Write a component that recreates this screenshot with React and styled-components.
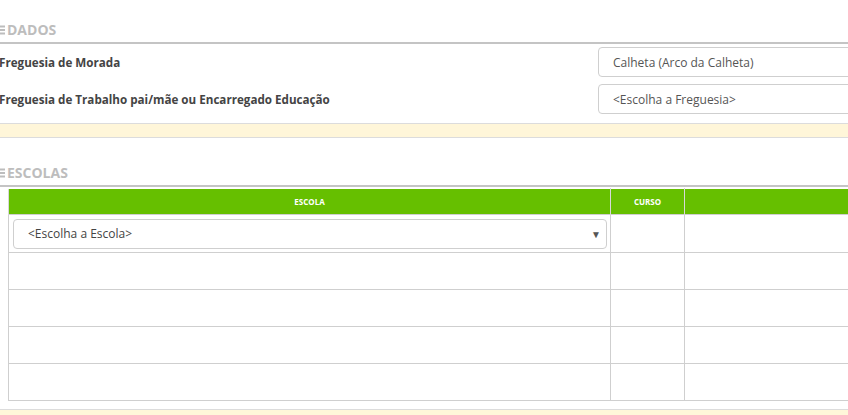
import React from 'react'
import styled, { createGlobalStyle } from 'styled-components'

const GlobalStyle = createGlobalStyle`
  html, body {
    margin: 0;
    padding: 0;
    background: #fff;
    overflow: hidden;
    font-family: 'Open Sans', 'Liberation Sans', sans-serif;
  }
`

const Page = styled.div`
  width: 848px;
  height: 415px;
  overflow: hidden;
  padding-top: 20px;
  box-sizing: border-box;
`

const SectionTitle = styled.div`
  display: flex;
  align-items: center;
  gap: 2px;
  margin-left: -6px;
  height: 20px;
  padding-bottom: 2px;
  border-bottom: 2px solid #c4c4c4;
  color: #bdbdbd;
  font-size: 14px;
  font-weight: 700;
  line-height: 20px;
  text-transform: uppercase;
`

const BarsIcon = () => (
  <svg width='11' height='10' viewBox='0 0 11 10'>
    <rect x='0' y='0.5' width='11' height='2' fill='#bdbdbd' />
    <rect x='0' y='4' width='11' height='2' fill='#bdbdbd' />
    <rect x='0' y='7.5' width='11' height='2' fill='#bdbdbd' />
  </svg>
)

const Fields = styled.div`
  display: flex;
  flex-direction: column;
  gap: 7px;
  padding-top: 3px;
  padding-bottom: 9px;
`

const FieldRow = styled.div`
  display: flex;
  align-items: center;
`

const Label = styled.label`
  flex: 0 0 599px;
  margin-left: -1px;
  font-size: 11.65px;
  font-weight: 700;
  color: #444;
`

const Input = styled.div`
  flex: 0 0 300px;
  height: 30px;
  box-sizing: border-box;
  border: 1px solid #cfcfcf;
  border-radius: 4px;
  padding: 0 14px;
  display: flex;
  align-items: center;
  font-size: 12px;
  color: #555;
`

const Notice = styled.div`
  height: 13px;
  background: #fff6d9;
  border-top: 1px solid #dcdcdc;
  border-bottom: 1px solid #dcdcdc;
  margin-bottom: ${(p) => p.$gap || 0}px;
`

const Table = styled.table`
  margin-left: 8px;
  margin-top: 1px;
  width: 1000px;
  border-collapse: collapse;
  table-layout: fixed;
`

const Th = styled.th`
  background: #66bf00;
  color: #fff;
  height: 25px;
  padding: 0;
  font-size: 8px;
  font-weight: 700;
  text-transform: uppercase;
  text-align: center;
  border-left: 1px solid #d8d8d8;
  border-right: 1px solid #d8d8d8;
  border-top: 1px solid #fff;
`

const Td = styled.td`
  height: ${(p) => p.$h || 36}px;
  padding: 0;
  border: 1px solid #cfcfcf;
  vertical-align: middle;
`

const Select = styled.div`
  margin: 0 3px 0 4px;
  height: 30px;
  box-sizing: border-box;
  border: 1px solid #cfcfcf;
  border-radius: 4px;
  padding: 0 5px 0 14px;
  display: flex;
  align-items: center;
  justify-content: space-between;
  font-size: 12px;
  color: #444;
`

const Caret = styled.span`
  font-size: 10px;
  color: #555;
`

const Bottom = styled.div`
  margin-top: 8px;
`

export default function App() {
  const emptyRows = [0, 1, 2, 3]
  return (
    <>
      <GlobalStyle />
      <Page>
        <SectionTitle>
          <BarsIcon />
          Dados
        </SectionTitle>
        <Fields>
          <FieldRow>
            <Label>Freguesia de Morada</Label>
            <Input>Calheta (Arco da Calheta)</Input>
          </FieldRow>
          <FieldRow>
            <Label>Freguesia de Trabalho pai/mãe ou Encarregado Educação</Label>
            <Input>&lt;Escolha a Freguesia&gt;</Input>
          </FieldRow>
        </Fields>
        <Notice $gap={25} />
        <SectionTitle>
          <BarsIcon />
          Escolas
        </SectionTitle>
        <Table>
          <colgroup>
            <col style={{ width: 602 }} />
            <col style={{ width: 74 }} />
            <col />
          </colgroup>
          <thead>
            <tr>
              <Th>Escola</Th>
              <Th>Curso</Th>
              <Th />
            </tr>
          </thead>
          <tbody>
            <tr>
              <Td $h={37}>
                <Select>
                  &lt;Escolha a Escola&gt;
                  <Caret>▼</Caret>
                </Select>
              </Td>
              <Td $h={37} />
              <Td $h={37} />
            </tr>
            {emptyRows.map((r) => (
              <tr key={r}>
                <Td />
                <Td />
                <Td />
              </tr>
            ))}
          </tbody>
        </Table>
        <Bottom>
          <Notice />
        </Bottom>
      </Page>
    </>
  )
}
